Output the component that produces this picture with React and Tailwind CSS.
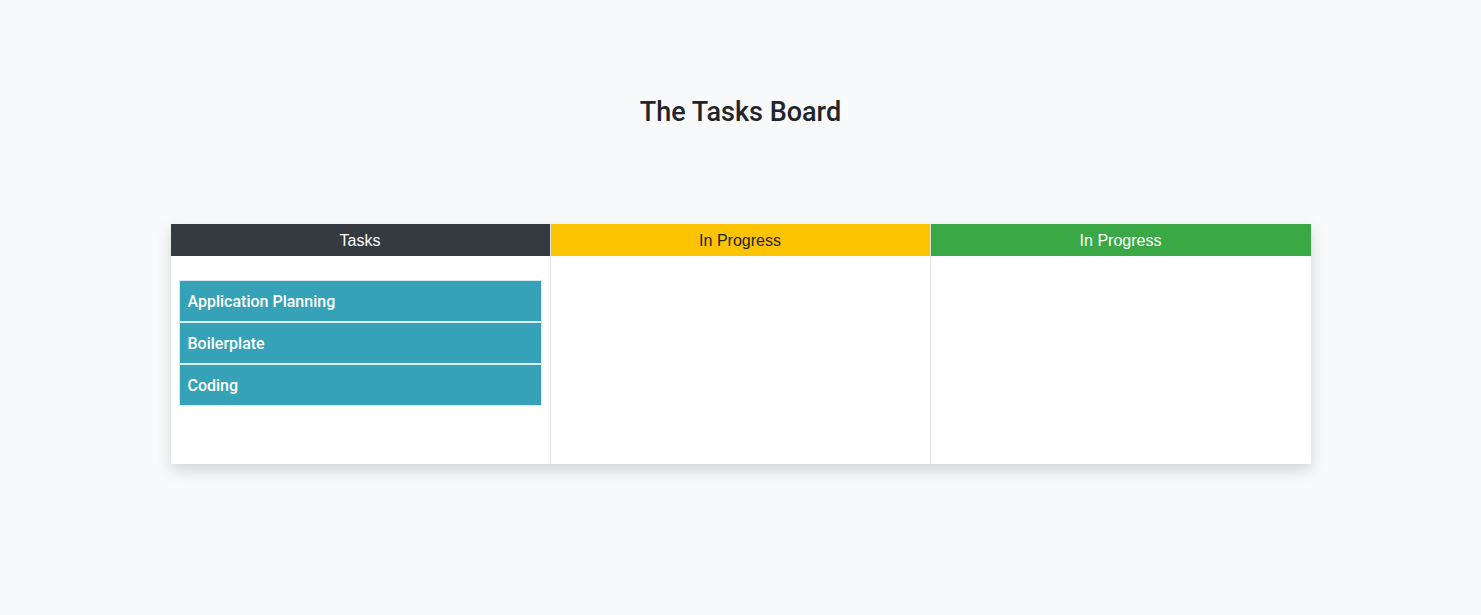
import React from 'react';

const columns = [
  { title: 'Tasks', header: 'bg-[#343a40] text-white', items: ['Application Planning', 'Boilerplate', 'Coding'] },
  { title: 'In Progress', header: 'bg-[#fcc400] text-[#212529]', items: [] },
  { title: 'In Progress', header: 'bg-[#3aa845] text-white', items: [] },
];

const App = () => {
  return (
    <div
      className="min-h-[615px] bg-[#f8f9fa] pt-[95px]"
      style={{ fontFamily: '"Helvetica Neue", Arial, "Liberation Sans", sans-serif' }}
    >
      <h1 className="text-center text-[27px] leading-[34px] font-medium text-[#212529] font-['Roboto',sans-serif]">
        The Tasks Board
      </h1>

      <div className="mx-auto mt-[95px] w-[1140px] grid grid-cols-3 bg-white shadow-[0_6px_14px_rgba(0,0,0,0.15)]">
        {columns.map((col, i) => (
          <div key={i} className={i < 2 ? 'border-r border-[#e3e3e3]' : ''}>
            <div className={`h-8 pt-px flex items-center justify-center text-base ${col.header}`}>
              {col.title}
            </div>
            <div className="h-[208px] pt-6 px-2">
              {col.items.map((item) => (
                <div
                  key={item}
                  className="h-[42px] pt-px flex items-center pl-2 border border-[#d8ecf0] bg-[#35a2b7] text-white text-base font-medium font-['Roboto',sans-serif]"
                >
                  {item}
                </div>
              ))}
            </div>
          </div>
        ))}
      </div>
    </div>
  );
};

export default App;
